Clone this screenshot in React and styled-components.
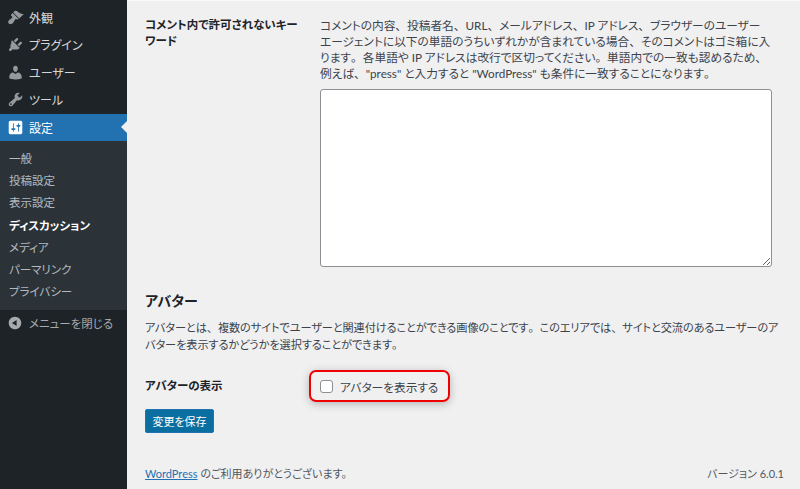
import React from 'react';
import styled, { createGlobalStyle } from 'styled-components';

const GlobalStyle = createGlobalStyle`
  html, body {
    margin: 0;
    height: 100%;
    overflow: hidden;
    background: #f0f0f1;
  }
  body {
    font-family: Lato, "Noto Sans CJK JP", sans-serif;
    font-size: 12px;
    color: #3c434a;
    font-feature-settings: "palt";
  }
  #root { height: 100%; }
`;

const Page = styled.div`
  display: flex;
  width: 800px;
  height: 489px;
  overflow: hidden;
`;

const Sidebar = styled.nav`
  flex: 0 0 127px;
  display: flex;
  flex-direction: column;
  background: #1d2327;
  padding-top: 3.5px;
`;

const MenuItem = styled.a`
  position: relative;
  display: flex;
  align-items: center;
  gap: 5px;
  height: 27.5px;
  padding-left: 7px;
  font-size: 12px;
  color: ${p => (p.$active ? '#fff' : '#f0f0f1')};
  background: ${p => (p.$active ? '#2271b1' : 'transparent')};
  opacity: ${p => (p.$active ? 1 : 0.88)};

  svg {
    flex: none;
    width: 17px;
    height: 17px;
    fill: ${p => (p.$active ? '#fff' : '#a7aaad')};
  }

  ${p => p.$active && `
    &::after {
      content: '';
      position: absolute;
      right: 0;
      top: 50%;
      margin-top: -6px;
      border: 6px solid transparent;
      border-right-color: #f0f0f1;
      border-left-width: 0;
    }
  `}
`;

const SubMenu = styled.div`
  display: flex;
  flex-direction: column;
  background: #2c3338;
  padding: 5.5px 0 7.5px;
`;

const SubItem = styled.a`
  display: flex;
  align-items: center;
  height: 22.3px;
  padding-left: 9px;
  font-size: 11.5px;
  font-weight: ${p => (p.$current ? 700 : 400)};
  color: ${p => (p.$current ? '#fff' : 'rgba(240, 246, 252, 0.7)')};
`;

const Collapse = styled.div`
  display: flex;
  align-items: center;
  gap: 6px;
  height: 26px;
  padding-left: 7px;
  font-size: 11.5px;
  color: #a7aaad;

  svg {
    flex: none;
    width: 16px;
    height: 16px;
    fill: #a7aaad;
  }
`;

const Main = styled.main`
  flex: 1;
  min-width: 0;
  display: flex;
  flex-direction: column;
  border-top: 1px solid #fafafa;
  padding: 16px 16px 0 18px;
`;

const FormRow = styled.div`
  display: grid;
  grid-template-columns: 175px 1fr;
`;

const Label = styled.div`
  font-size: 11.5px;
  font-weight: 700;
  line-height: 16px;
  color: #1d2327;
`;

const Description = styled.p`
  margin: 0;
  font-size: 11.7px;
  line-height: 16px;
  color: #3c434a;
  white-space: nowrap;
`;

// 句読点だけ全角のまま
const Punct = styled.span`
  font-feature-settings: normal;
`;

const Keywords = styled.textarea`
  display: block;
  box-sizing: border-box;
  width: 452px;
  height: 178px;
  margin-top: 8px;
  border: 1px solid #8c8f94;
  border-radius: 3px;
  background: #fff;
  resize: both;
  outline: none;
`;

const SectionTitle = styled.h2`
  margin: 25px 0 0;
  font-size: 14px;
  line-height: 18px;
  font-weight: 700;
  color: #1d2327;
`;

const SectionText = styled(Description)`
  margin-top: 9px;
  font-size: 11.2px;
  letter-spacing: -0.1px;
  line-height: 17px;
`;

const AvatarRow = styled.div`
  display: grid;
  grid-template-columns: 164px 1fr;
  align-items: center;
  margin-top: 17px;
`;

const Highlight = styled.label`
  display: inline-flex;
  align-items: center;
  gap: 7px;
  box-sizing: border-box;
  width: 141px;
  height: 32px;
  padding-left: 9px;
  border: 2px solid #f00000;
  border-radius: 7px;
  font-size: 11.7px;
  color: #3c434a;
  box-shadow: 0 2px 8px rgba(0, 0, 0, 0.25);
`;

const Checkbox = styled.span`
  box-sizing: border-box;
  width: 13px;
  height: 13px;
  border: 1px solid #8c8f94;
  border-radius: 3px;
  background: #fff;
`;

const SaveButton = styled.button`
  align-self: flex-start;
  box-sizing: border-box;
  width: 69px;
  height: 24px;
  margin-top: 7px;
  padding: 0;
  border: 1px solid #2271b1;
  border-radius: 2px;
  background: #0a6fa0;
  color: #fff;
  font: inherit;
  font-size: 11px;
`;

const Footer = styled.footer`
  display: flex;
  justify-content: space-between;
  align-items: center;
  margin-top: auto;
  height: 32px;
  font-size: 11px;
  color: #50575e;

  a {
    color: #2271b1;
    text-decoration: underline;
  }
`;

const icons = {
  brush: 'M14.48 11.06L7.41 3.99l1.5-1.5c.5-.56 2.3-.47 3.51.32 1.21.8 1.43 1.28 2.91 2.1 1.18.64 2.45 1.26 4.45.85zm-.71.71L6.7 4.7 4.93 6.47c-.39.39-.39 1.02 0 1.41l1.06 1.06c.39.39.39 1.03 0 1.42-.6.6-1.43 1.11-2.21 1.69-.35.26-.7.53-1.01.84C1.43 13.23.78 15.78 2.08 17.08c.62.62 1.52.86 2.47.68.91-.17 1.82-.7 2.54-1.43.49-.49.66-1.08 1.01-1.59.29-.41.65-.94.94-1.52.28-.59.6-1.07 1.3-1.37.31-.13.61-.02.84.21l.05.06c.39.39 1.02.39 1.41 0z',
  plugin: 'M13.11 4.36L9.87 7.6 8 5.73l3.24-3.24c.35-.34 1.05-.2 1.56.32.52.51.66 1.21.31 1.55zm-8 1.77l.91-1.12 9.01 9.01-1.19.84c-.71.71-2.63 1.16-3.82 1.16H6.14L4.9 17.26c-.59.59-1.54.59-2.12 0-.59-.58-.59-1.53 0-2.12l1.24-1.24v-1.88c0-1.19.46-3.11 1.09-3.89zm7.26 3.97l3.24-3.24c.34-.35 1.04-.21 1.55.31.52.51.66 1.21.31 1.55l-3.24 3.25z',
  user: 'M10 9.25c-2.27 0-2.73-3.44-2.73-3.44C7 4.02 7.82 2 9.97 2c2.16 0 2.98 2.02 2.71 3.81 0 0-.41 3.44-2.68 3.44zm0 2.57L12.72 10c2.39 0 4.52 2.33 4.52 4.53v2.49s-3.65 1.13-7.24 1.13c-3.65 0-7.24-1.13-7.24-1.13v-2.49c0-2.25 1.94-4.48 4.47-4.48z',
  tools: 'M16.68 9.77c-1.34 1.34-3.3 1.67-4.95.99l-5.41 6.52c-.99.99-2.59.99-3.58 0s-.99-2.59 0-3.57l6.52-5.42c-.68-1.65-.35-3.61.99-4.95 1.28-1.28 3.12-1.62 4.72-1.06l-2.89 2.89 2.82 2.82 2.86-2.87c.53 1.58.18 3.39-1.08 4.65zM3.81 16.21c.4.39 1.04.39 1.43 0 .4-.4.4-1.04 0-1.43-.39-.4-1.03-.4-1.43 0-.39.39-.39 1.03 0 1.43z',
  settings: 'M18 16V4c0-1.1-.9-2-2-2H4c-1.1 0-2 .9-2 2v12c0 1.1.9 2 2 2h12c1.1 0 2-.9 2-2zM8 11h1c.55 0 1 .45 1 1s-.45 1-1 1H8v1.5c0 .28-.22.5-.5.5s-.5-.22-.5-.5V13H6c-.55 0-1-.45-1-1s.45-1 1-1h1V5.5c0-.28.22-.5.5-.5s.5.22.5.5V11zm5-2h-1c-.55 0-1-.45-1-1s.45-1 1-1h1V5.5c0-.28.22-.5.5-.5s.5.22.5.5V7h1c.55 0 1 .45 1 1s-.45 1-1 1h-1v5.5c0 .28-.22.5-.5.5s-.5-.22-.5-.5V9z',
  collapse: 'M10 2.16c4.33 0 7.84 3.51 7.84 7.84s-3.51 7.84-7.84 7.84S2.16 14.33 2.16 10 5.71 2.16 10 2.16zm2 11.72V6.12L6.18 9.97z',
};

const Icon = ({ name }) => (
  <svg viewBox="0 0 20 20" aria-hidden="true">
    <path d={icons[name]} />
  </svg>
);

const menu = [
  { icon: 'brush', label: '外観' },
  { icon: 'plugin', label: 'プラグイン' },
  { icon: 'user', label: 'ユーザー' },
  { icon: 'tools', label: 'ツール' },
  { icon: 'settings', label: '設定', active: true },
];

const subMenu = ['一般', '投稿設定', '表示設定', 'ディスカッション', 'メディア', 'パーマリンク', 'プライバシー'];

const keywordHelp = [
  'コメントの内容、投稿者名、URL、メールアドレス、IP アドレス、ブラウザーのユーザー',
  'エージェントに以下の単語のうちいずれかが含まれている場合、そのコメントはゴミ箱に入',
  'ります。各単語や IP アドレスは改行で区切ってください。単語内での一致も認めるため、',
  '例えば、"press" と入力すると "WordPress" も条件に一致することになります。',
];

const avatarHelp = [
  'アバターとは、複数のサイトでユーザーと関連付けることができる画像のことです。このエリアでは、サイトと交流のあるユーザーのア',
  'バターを表示するかどうかを選択することができます。',
];

const Lines = ({ lines }) =>
  lines.map((line, i) => (
    <React.Fragment key={i}>
      {line.split(/([、。])/).map((part, j) =>
        j % 2 ? <Punct key={j}>{part}</Punct> : part
      )}
      {i < lines.length - 1 && <br />}
    </React.Fragment>
  ));

export default function App() {
  return (
    <Page>
      <GlobalStyle />
      <Sidebar>
        {menu.map(item => (
          <MenuItem key={item.label} $active={item.active}>
            <Icon name={item.icon} />
            {item.label}
          </MenuItem>
        ))}
        <SubMenu>
          {subMenu.map(label => (
            <SubItem key={label} $current={label === 'ディスカッション'}>{label}</SubItem>
          ))}
        </SubMenu>
        <Collapse>
          <Icon name="collapse" />
          メニューを閉じる
        </Collapse>
      </Sidebar>
      <Main>
        <FormRow>
          <Label>コメント内で許可されないキー<br />ワード</Label>
          <div>
            <Description><Lines lines={keywordHelp} /></Description>
            <Keywords aria-label="コメント内で許可されないキーワード" />
          </div>
        </FormRow>
        <SectionTitle>アバター</SectionTitle>
        <SectionText><Lines lines={avatarHelp} /></SectionText>
        <AvatarRow>
          <Label>アバターの表示</Label>
          <Highlight>
            <Checkbox />
            アバターを表示する
          </Highlight>
        </AvatarRow>
        <SaveButton>変更を保存</SaveButton>
        <Footer>
          <span><a>WordPress</a> のご利用ありがとうございます。</span>
          <span>バージョン 6.0.1</span>
        </Footer>
      </Main>
    </Page>
  );
}
